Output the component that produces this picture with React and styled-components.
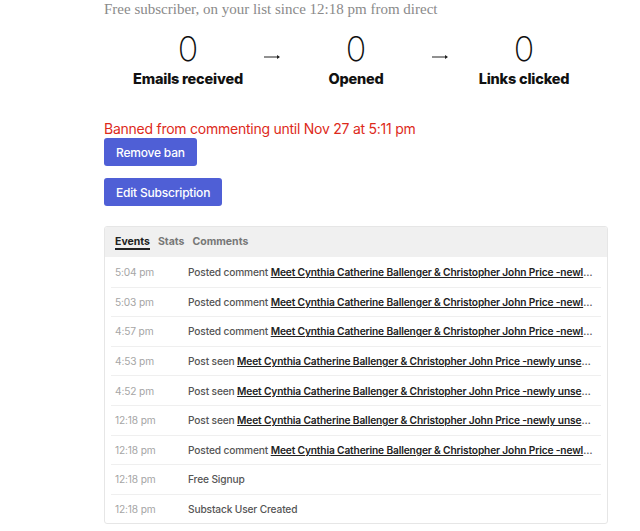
import React from 'react';
import styled, { createGlobalStyle } from 'styled-components';

const GlobalStyle = createGlobalStyle`
  html, body {
    margin: 0;
    padding: 0;
    background: #fff;
  }
  body {
    font-family: Inter, "Liberation Sans", sans-serif;
    overflow: hidden;
  }
`;

const Page = styled.div`
  width: 504px;
  padding: 0 32px 0 104px;
`;

const Subtitle = styled.div`
  font-family: "Liberation Serif", "DejaVu Serif", serif;
  font-size: 15px;
  color: #8a8a8a;
  line-height: 18px;
`;

const StatsRow = styled.div`
  display: flex;
  margin-top: 14px;
`;

const Stat = styled.div`
  flex: 1;
  display: flex;
  flex-direction: column;
  align-items: center;
`;

const Number = styled.div`
  font-size: 34px;
  font-weight: 200;
  line-height: 34px;
  color: #111;
`;

const Label = styled.div`
  font-size: 14.5px;
  font-weight: 800;
  color: #111;
  margin-top: 4px;
  letter-spacing: -0.2px;
`;

const ArrowSlot = styled.div`
  width: 0;
  display: flex;
  justify-content: center;
  padding-top: 22px;
  > svg {
    flex-shrink: 0;
  }
`;

const BanText = styled.div`
  margin-top: 33px;
  font-size: 14px;
  color: #dd2a1b;
  line-height: 18px;
  letter-spacing: -0.25px;
`;

const Button = styled.button`
  display: block;
  border: none;
  border-radius: 3px;
  background: #4f5fd6;
  color: #fff;
  font-family: Inter, "Liberation Sans", sans-serif;
  font-size: 12px;
  font-weight: 500;
  letter-spacing: -0.2px;
  height: 28px;
  padding: 0 12px;
  margin-top: ${({ gap }) => gap}px;
`;

const Card = styled.div`
  margin-top: 20px;
  border: 1px solid #e6e6e6;
  border-radius: 3px;
  overflow: hidden;
`;

const Tabs = styled.div`
  display: flex;
  gap: 8px;
  background: #f0f0f0;
  height: 30px;
  align-items: center;
  padding: 0 10px;
`;

const Tab = styled.div`
  font-size: 10.5px;
  font-weight: 700;
  color: ${({ active }) => (active ? '#222' : '#777')};
  padding-top: 1px;
  border-bottom: 2px solid ${({ active }) => (active ? '#222' : 'transparent')};
  line-height: 12px;
`;

const Rows = styled.div`
  padding: 0 6px;
`;

const Row = styled.div`
  display: flex;
  align-items: center;
  height: 29.6px;
  border-top: ${({ first }) => (first ? 'none' : '1px solid #efefef')};
  box-sizing: border-box;
  font-size: 10.2px;
  letter-spacing: -0.15px;
  white-space: nowrap;
`;

const Time = styled.div`
  width: 73px;
  padding-left: 4px;
  color: #a5a5a5;
  flex-shrink: 0;
`;

const Desc = styled.div`
  color: #555;
  font-weight: 500;
  overflow: hidden;
  text-overflow: ellipsis;
  flex: 1;
  padding-right: 6px;
`;

const Link = styled.span`
  color: #222;
  font-weight: 600;
  text-decoration: underline;
`;

const Arrow = () => (
  <svg width="18" height="6" viewBox="0 0 18 6">
    <path d="M1 3 H16" stroke="#222" strokeWidth="1" />
    <path d="M14 1 L17 3 L14 5 Z" fill="#222" />
  </svg>
);

const TITLE = 'Meet Cynthia Catherine Ballenger & Christopher John Price -newly unsealed documents';

const events = [
  { time: '5:04 pm', kind: 'Posted comment', link: true },
  { time: '5:03 pm', kind: 'Posted comment', link: true },
  { time: '4:57 pm', kind: 'Posted comment', link: true },
  { time: '4:53 pm', kind: 'Post seen', link: true },
  { time: '4:52 pm', kind: 'Post seen', link: true },
  { time: '12:18 pm', kind: 'Post seen', link: true },
  { time: '12:18 pm', kind: 'Posted comment', link: true },
  { time: '12:18 pm', kind: 'Free Signup' },
  { time: '12:18 pm', kind: 'Substack User Created' },
];

export default function App() {
  return (
    <Page>
      <GlobalStyle />
      <Subtitle>Free subscriber, on your list since 12:18 pm from direct</Subtitle>
      <StatsRow>
        <Stat>
          <Number>0</Number>
          <Label>Emails received</Label>
        </Stat>
        <ArrowSlot><Arrow /></ArrowSlot>
        <Stat>
          <Number>0</Number>
          <Label>Opened</Label>
        </Stat>
        <ArrowSlot><Arrow /></ArrowSlot>
        <Stat>
          <Number>0</Number>
          <Label>Links clicked</Label>
        </Stat>
      </StatsRow>
      <BanText>Banned from commenting until Nov 27 at 5:11 pm</BanText>
      <Button gap={0}>Remove ban</Button>
      <Button gap={12}>Edit Subscription</Button>
      <Card>
        <Tabs>
          <Tab active>Events</Tab>
          <Tab>Stats</Tab>
          <Tab>Comments</Tab>
        </Tabs>
        <Rows>
          {events.map((e, i) => (
            <Row key={i} first={i === 0}>
              <Time>{e.time}</Time>
              <Desc>
                {e.kind}
                {e.link && <> <Link>{TITLE}</Link></>}
              </Desc>
            </Row>
          ))}
        </Rows>
      </Card>
    </Page>
  );
}
